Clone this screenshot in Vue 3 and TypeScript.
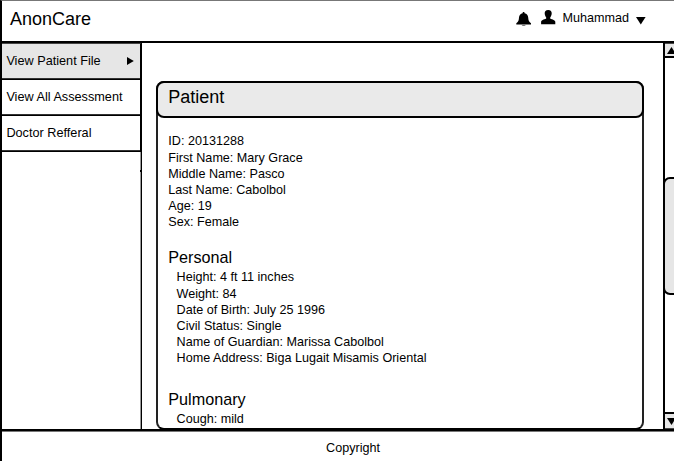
<script setup lang="ts">
import { ref } from 'vue'

interface Section {
  title: string
  rows: string[]
}

const menu: string[] = ['View Patient File', 'View All Assessment', 'Doctor Refferal']
const active = ref(0)

const identity: string[] = [
  'ID: 20131288',
  'First Name: Mary Grace',
  'Middle Name: Pasco',
  'Last Name: Cabolbol',
  'Age: 19',
  'Sex: Female',
]

const sections: Section[] = [
  {
    title: 'Personal',
    rows: [
      'Height: 4 ft 11 inches',
      'Weight: 84',
      'Date of Birth: July 25 1996',
      'Civil Status: Single',
      'Name of Guardian: Marissa Cabolbol',
      'Home Address: Biga Lugait Misamis Oriental',
    ],
  },
  { title: 'Pulmonary', rows: ['Cough: mild'] },
]
</script>

<template>
  <div class="app">
    <header class="top">
      <h1 class="brand">AnonCare</h1>
      <div class="user">
        <svg class="bell" width="16" height="16" viewBox="0 0 16 16">
          <path d="M7.6 0C8.3 0 8.6.5 8.6 1.2C10.9 1.7 12 3.4 12.2 5.6C12.4 8.4 12.7 9.6 15 11.2V12.4H.3V11.2C2.6 9.6 2.8 8.4 3 5.6C3.2 3.4 4.4 1.7 6.6 1.2C6.6.5 6.9 0 7.6 0Z" />
          <path class="clapper" d="M5.6 12.8H9.8C9.5 14.5 5.9 14.5 5.6 12.8Z" />
        </svg>
        <svg class="person" width="15" height="15" viewBox="0 0 15 15">
          <path d="M7.2 0C9.7 0 10.9 1.5 10.7 3.7C10.5 5.7 9.6 6.7 9.2 7.5V8.6C9.6 9.5 14 9.6 14.3 11.8V14.2H.1V11.8C.4 9.6 4.8 9.5 5.2 8.6V7.5C4.8 6.7 3.9 5.7 3.7 3.7C3.5 1.5 4.7 0 7.2 0Z" />
        </svg>
        <span class="name">Muhammad</span>
        <svg class="caret" width="10" height="8" viewBox="0 0 10 8"><path d="M0 0H9.6L4.8 7.6Z" /></svg>
      </div>
    </header>

    <div class="body">
      <nav class="side">
        <button
          v-for="(item, i) in menu"
          :key="item"
          class="item"
          :class="{ active: i === active }"
          @click="active = i"
        >
          <span>{{ item }}</span>
          <svg v-if="i === active" width="7" height="8" viewBox="0 0 7 8"><path d="M0 0L6.8 4L0 8Z" /></svg>
        </button>
        <div class="mark"></div>
      </nav>

      <main class="content">
        <article class="card">
          <h2 class="card-title">Patient</h2>
          <div class="card-body">
            <ul class="identity">
              <li v-for="row in identity" :key="row">{{ row }}</li>
            </ul>
            <section v-for="s in sections" :key="s.title" class="section">
              <h3>{{ s.title }}</h3>
              <ul>
                <li v-for="row in s.rows" :key="row">{{ row }}</li>
              </ul>
            </section>
          </div>
        </article>
      </main>

      <div class="scroll">
        <div class="arrow up"><svg width="9" height="7" viewBox="0 0 9 7"><path d="M0 7H9L4.5 0Z" /></svg></div>
        <div class="track"><div class="thumb"></div></div>
        <div class="arrow down"><svg width="9" height="7" viewBox="0 0 9 7"><path d="M0 0H9L4.5 7Z" /></svg></div>
      </div>
    </div>

    <footer class="foot">Copyright</footer>
  </div>
</template>

<style>
body {
  background: #fff;
  overflow: hidden;
}
</style>

<style scoped>
.app {
  box-sizing: border-box;
  width: 674px;
  height: 461px;
  display: flex;
  flex-direction: column;
  overflow: hidden;
  border-top: 1px solid #777;
  border-left: 2px solid #000;
  font-family: "Liberation Sans", Arial, sans-serif;
  font-size: 12.6px;
  line-height: 16px;
  color: #000;
  background: #fff;
}
h1, h2, h3, ul {
  margin: 0;
  padding: 0;
  font-weight: 400;
  list-style: none;
}
.top {
  box-sizing: border-box;
  flex: none;
  height: 42px;
  display: flex;
  justify-content: space-between;
  align-items: flex-start;
  padding: 8px 28px 0 8px;
  border-bottom: 2px solid #000;
}
.brand {
  font-size: 18px;
  line-height: 20px;
}
.user {
  display: flex;
  align-items: flex-start;
}
.bell {
  margin: 3px 9px 0 0;
}
.clapper {
  fill: #777;
}
.person {
  margin: 1px 7px 0 0;
}
.name {
  margin: 1px 7px 0 0;
}
.caret {
  margin-top: 8px;
}
.body {
  flex: none;
  height: 386px;
  display: flex;
}
.side {
  box-sizing: border-box;
  flex: none;
  width: 140px;
  border-right: 1px solid #000;
  box-shadow: inset -1px 0 #999;
}
.item {
  box-sizing: border-box;
  width: 139px;
  height: 36px;
  display: flex;
  align-items: center;
  justify-content: space-between;
  padding: 0 6px 1px 4.4px;
  border: 0;
  border-bottom: 1px solid #000;
  border-right: 1px solid #000;
  box-shadow: inset 0 -1px #333;
  background: #fff;
  color: #000;
  font: inherit;
  font-size: 12.7px;
  white-space: nowrap;
}
.item.active {
  height: 37px;
  border-top: 1px solid #444;
  background: #e6e6e6;
}
.mark {
  width: 1px;
  height: 2px;
  margin: 18px 0 0 138px;
  background: #000;
}
.content {
  flex: 1;
  padding: 38px 19px 0 14px;
}
.card {
  box-sizing: border-box;
  width: 488px;
  height: 349px;
  border: 2px solid #000;
  border-left-color: #222;
  border-right-color: #222;
  border-radius: 8px;
}
.card-title {
  box-sizing: border-box;
  width: 488px;
  height: 37px;
  margin: -2px 0 0 -2px;
  padding: 4px 11px 0 10.2px;
  border: 2px solid #000;
  border-radius: 8px;
  background: #eaeaea;
  font-size: 18px;
  line-height: 20px;
}
.card-body {
  padding: 15px 10px 0 10.3px;
}
.identity li:first-child {
  margin-bottom: 1px;
}
.section {
  padding-top: 17px;
}
.section h3 {
  font-size: 16.2px;
  line-height: 20px;
}
.section ul {
  padding: 2px 0 0 8.3px;
}
.section li:first-child {
  margin-bottom: 1px;
}
.section + .section {
  padding-top: 23px;
}
.scroll {
  box-sizing: border-box;
  flex: none;
  width: 18px;
  margin-right: -7px;
  height: 386px;
  display: flex;
  flex-direction: column;
  border-left: 2px solid #000;
}
.arrow {
  box-sizing: border-box;
  flex: none;
  height: 15px;
  display: flex;
  padding-left: 2px;
  align-items: center;
  background: #e6e6e6;
}
.up {
  border-top: 1px solid #444;
  border-bottom: 2px solid #000;
}
.down {
  height: 17px;
  border-top: 2px solid #000;
  border-bottom: 1px solid #444;
}
.track {
  flex: 1;
  padding-top: 119px;
}
.thumb {
  box-sizing: border-box;
  width: 18px;
  height: 118px;
  margin-left: -2px;
  border: 2px solid #000;
  border-radius: 7px;
  background: #e6e6e6;
}
.foot {
  box-sizing: border-box;
  flex: none;
  height: 32px;
  border-top: 2px solid #000;
  box-shadow: inset 0 1px #777;
  padding: 9px 0 0 30px;
  text-align: center;
}
</style>
